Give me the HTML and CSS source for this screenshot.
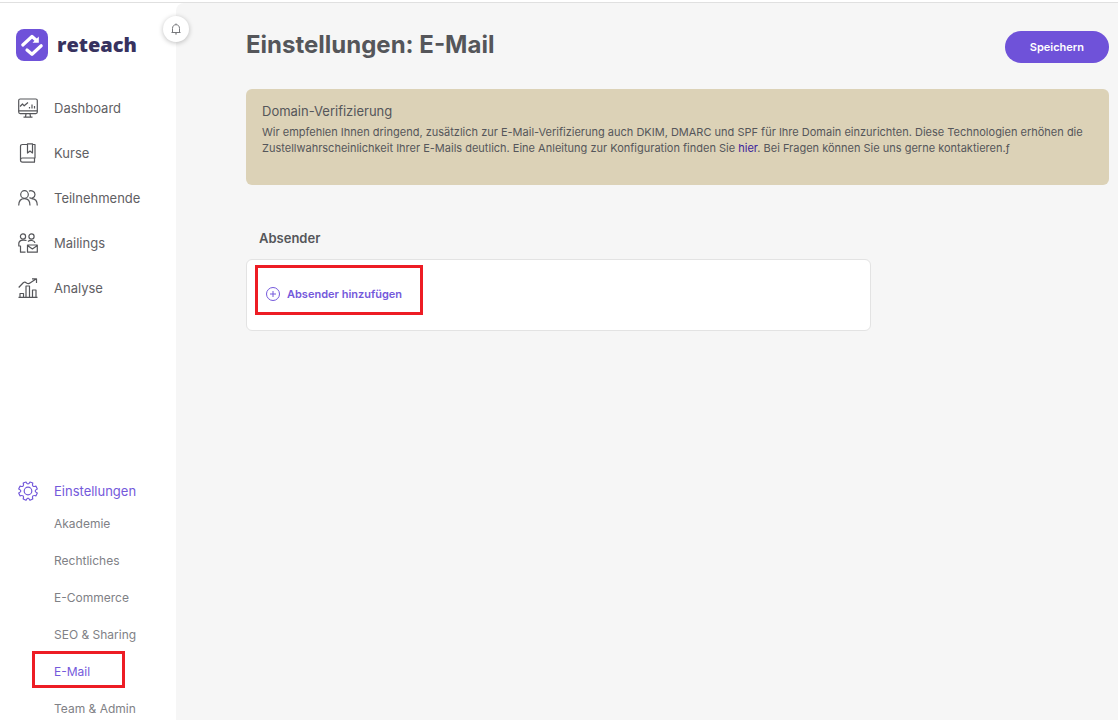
FILE: index.html
```
<!DOCTYPE html>
<html lang="de">
<head>
<meta charset="UTF-8">
<meta name="viewport" content="width=device-width, initial-scale=1.0">
<title>Einstellungen: E-Mail</title>
<link rel="stylesheet" href="styles.css">
</head>
<body>
    <div class="page">
        <aside class="sidebar">
            <a class="logo" href="#">
                <svg class="logo-mark" viewBox="0 0 32 32">
                    <rect width="32" height="32" rx="8" fill="#6f52d9"/>
                    <path d="M6.800 16 L16 7.500 L20 11" fill="none" stroke="#fff" stroke-width="3.200" stroke-linecap="round" stroke-linejoin="round"/>
                    <path d="M22.800 7.500 V13.800 H16.500 Z" fill="#fff"/>
                    <path d="M11 21 L16 25.300 L25.200 16.800" fill="none" stroke="#fff" stroke-width="3.200" stroke-linecap="round" stroke-linejoin="round"/>
                </svg>
                <span>reteach</span>
            </a>

            <button class="bell" aria-label="Benachrichtigungen">
                <svg viewBox="0 0 12 12">
                    <path d="M1.500 9.500 H10.500 M2.500 9.500 V5.500 C2.500 3 4 1.700 6 1.700 S9.500 3 9.500 5.500 V9.500 M6 .5 V1.700 M5 10.500 Q6 12 7 10.500"/>
                </svg>
            </button>

            <nav>
                <a class="nav-item" href="#">
                    <svg class="icon" viewBox="0 0 20 20">
                        <rect x=".7" y="1" width="18.600" height="14.600" rx="1.500"/>
                        <path d="M.7 12.800 H19.300 M8 15.600 L7.500 19 M12 15.600 L12.500 19 M5.500 19.200 H14.500 M2 8.500 L4.500 6 L6.200 7.800 L10 4.500 M11.500 10.500 V9 M14 10.500 V6.500 M16.500 10.500 V8"/>
                    </svg>
                    Dashboard
                </a>
                <a class="nav-item" href="#">
                    <svg class="icon" viewBox="0 0 20 20">
                        <path d="M9.500 1.500 H4.500 Q2.500 1.500 2.500 3.500 V17 Q2.500 19.200 4.500 19.200 H17 M16.500 19 V15 H4.500 Q2.500 15 2.500 17 M14.500 1.500 H17 V15 H16 M9.500 .8 H14.500 V10 L12 8 L9.500 10 Z"/>
                    </svg>
                    Kurse
                </a>
                <a class="nav-item" href="#">
                    <svg class="icon" viewBox="0 0 20 20">
                        <circle cx="6.500" cy="6.500" r="3.800"/>
                        <path d="M.7 17.500 C.7 12.500 3 10.700 6.500 10.700 S12 13 12 17.500 M11 3.200 C13 2 17 3 17 6.500 C17 10 13 11 11.500 9.500 M13.500 10.700 C17.500 10.700 19.300 13 19.300 17.500"/>
                    </svg>
                    Teilnehmende
                </a>
                <a class="nav-item" href="#">
                    <svg class="icon" viewBox="0 0 20 20">
                        <circle cx="5" cy="3.500" r="2.600"/>
                        <circle cx="13.500" cy="3.500" r="2.600"/>
                        <path d="M8.500 7.500 C5 6.500 .8 7 .8 10.500 V13 H2.500 V19.200 H7.500 M10 8.500 C12 6.800 16.500 7 17 10 M9.500 12 H19.300 V19.200 H9.500 Z M9.500 12.500 L14.400 16 L19.300 12.500"/>
                    </svg>
                    Mailings
                </a>
                <a class="nav-item" href="#">
                    <svg class="icon" viewBox="0 0 20 20">
                        <path d="M.5 19.400 H19.500 M2 19 V15.500 H5.500 V19 M8 19 V8 H11.500 V19 M14.500 19 V12 H18 V19 M.7 9.500 L5.500 4.500 Q7 3.700 8.500 5 Q10.500 6.300 12 5 L18 1 M14 .8 H18.500 V5"/>
                    </svg>
                    Analyse
                </a>
            </nav>

            <nav class="settings-nav">
                <a class="nav-item active" href="#">
                    <svg class="icon" viewBox="0 0 20 20">
                        <circle cx="10" cy="10" r="3.800"/>
                        <path d="M8 1 Q10 5 12 1 L14.800 2 Q13.500 6.500 18 5.200 L19.300 8 Q15 10 19.300 12 L18 14.800 Q13.500 13.500 14.800 18 L12 19.300 Q10 15 8 19.300 L5.200 18 Q6.500 13.500 2 14.800 L.7 12 Q5 10 .7 8 L2 5.200 Q6.500 6.500 5.200 2 Z"/>
                    </svg>
                    Einstellungen
                </a>
                <a class="sub-item" href="#">Akademie</a>
                <a class="sub-item" href="#">Rechtliches</a>
                <a class="sub-item" href="#">E-Commerce</a>
                <a class="sub-item" href="#">SEO &amp; Sharing</a>
                <a class="sub-item active marked" href="#">E-Mail</a>
                <a class="sub-item" href="#">Team &amp; Admin</a>
            </nav>
        </aside>

        <main class="content">
            <header class="content-header">
                <h1>Einstellungen: E-Mail</h1>
                <button class="save">Speichern</button>
            </header>

            <section class="notice">
                <h2>Domain-Verifizierung</h2>
                <p>Wir empfehlen Ihnen dringend, zusätzlich zur E-Mail-Verifizierung auch DKIM, DMARC und SPF für Ihre Domain einzurichten. Diese Technologien erhöhen die Zustellwahrscheinlichkeit Ihrer E-Mails deutlich. Eine Anleitung zur Konfiguration finden Sie <a href="#">hier</a>. Bei Fragen können Sie uns gerne kontaktieren.ƒ</p>
            </section>

            <h3>Absender</h3>
            <section class="card">
                <button class="add-sender">
                    <svg viewBox="0 0 14 14">
                        <circle cx="7" cy="7" r="6.500"/>
                        <path d="M7 4 V10 M4 7 H10"/>
                    </svg>
                    Absender hinzufügen
                </button>
            </section>
        </main>
    </div>
</body>
</html>
```
FILE: styles.css
```
* {
    box-sizing: border-box;
}

body {
    margin: 0;
    padding-top: 2px;
    background-color: #ffffff;
    font-family: Inter, "Liberation Sans", sans-serif;
    color: #55565a;
}

a {
    text-decoration: none;
}

button {
    font-family: inherit;
    cursor: pointer;
}

.page {
    display: flex;
    height: calc(100vh - 2px);
    overflow: hidden;
    border-top: 1px solid #e0e0e0;
}

/* Sidebar */
.sidebar {
    position: relative;
    flex: 0 0 176px;
}

.logo {
    display: flex;
    align-items: center;
    gap: 9px;
    padding: 26px 0 24px 16px;
    font-family: "Open Sans", Inter, sans-serif;
    font-size: 20px;
    font-weight: 800;
    line-height: 32px;
    color: #37325f;
}

.logo-mark {
    width: 32px;
    height: 32px;
}

.bell {
    position: absolute;
    top: 13px;
    right: -13px;
    display: flex;
    align-items: center;
    justify-content: center;
    width: 26px;
    height: 26px;
    padding: 0;
    border: none;
    border-radius: 50%;
    background-color: #ffffff;
    box-shadow: 0 1px 5px rgba(0, 0, 0, 0.25);
}

.bell svg {
    width: 12px;
    height: 12px;
    fill: none;
    stroke: #77787c;
}

.nav-item {
    display: flex;
    align-items: center;
    gap: 16px;
    height: 45px;
    padding-left: 18px;
    font-size: 13px;
    color: #5f6064;
}

.icon {
    width: 20px;
    height: 20px;
    fill: none;
    stroke: #55565a;
    stroke-width: 1.2;
    stroke-linejoin: round;
}

.settings-nav {
    margin-top: 163px;
}

.sub-item {
    display: flex;
    align-items: center;
    height: 37px;
    padding-left: 54px;
    font-size: 12px;
    color: #808186;
}

.settings-nav .nav-item {
    height: 36px;
    margin-bottom: -4px;
}

.active,
.settings-nav .active {
    color: #7459db;
}

.active .icon {
    stroke: #7459db;
}

.marked {
    width: 93px;
    margin: -2px 0 2px 32px;
    padding: 3px 0 0 19px;
    border: 3px solid #ed1c24;
}

/* Content */
.content {
    flex: 1;
    min-width: 0;
    padding: 28px 9px 0 70px;
    border-top-left-radius: 8px;
    background-color: #f6f6f6;
}

.content-header {
    display: flex;
    align-items: flex-start;
    justify-content: space-between;
    margin-bottom: 26px;
}

h1 {
    margin: 0;
    font-size: 24px;
    line-height: 28px;
    font-weight: 700;
}

.save {
    height: 32px;
    padding: 0 25px;
    border: none;
    border-radius: 16px;
    background-color: #6f52d9;
    color: #ffffff;
    font-size: 11px;
    font-weight: 600;
}

.notice {
    min-height: 96px;
    padding: 14px 16px;
    border-radius: 6px;
    background-color: #dcd2b7;
}

.notice h2 {
    margin: 0 0 4px;
    font-size: 13px;
    line-height: 17px;
    font-weight: 400;
}

.notice p {
    margin: 0;
    font-size: 11px;
    line-height: 16px;
}

.notice a {
    color: #3b239b;
}

h3 {
    margin: 43px 13px 11px;
    font-size: 13px;
    line-height: 20px;
    font-weight: 600;
}

.card {
    max-width: 625px;
    padding: 5px 8px 15px;
    border: 1px solid #e3e3e3;
    border-radius: 6px;
    background-color: #ffffff;
}

.add-sender {
    display: flex;
    align-items: center;
    gap: 7px;
    height: 50px;
    padding: 8px 18px 0 8px;
    border: 3px solid #ed1c24;
    background: none;
    color: #7459db;
    font-size: 11px;
    font-weight: 600;
}

.add-sender svg {
    width: 14px;
    height: 14px;
    fill: none;
    stroke: #7459db;
}
```
